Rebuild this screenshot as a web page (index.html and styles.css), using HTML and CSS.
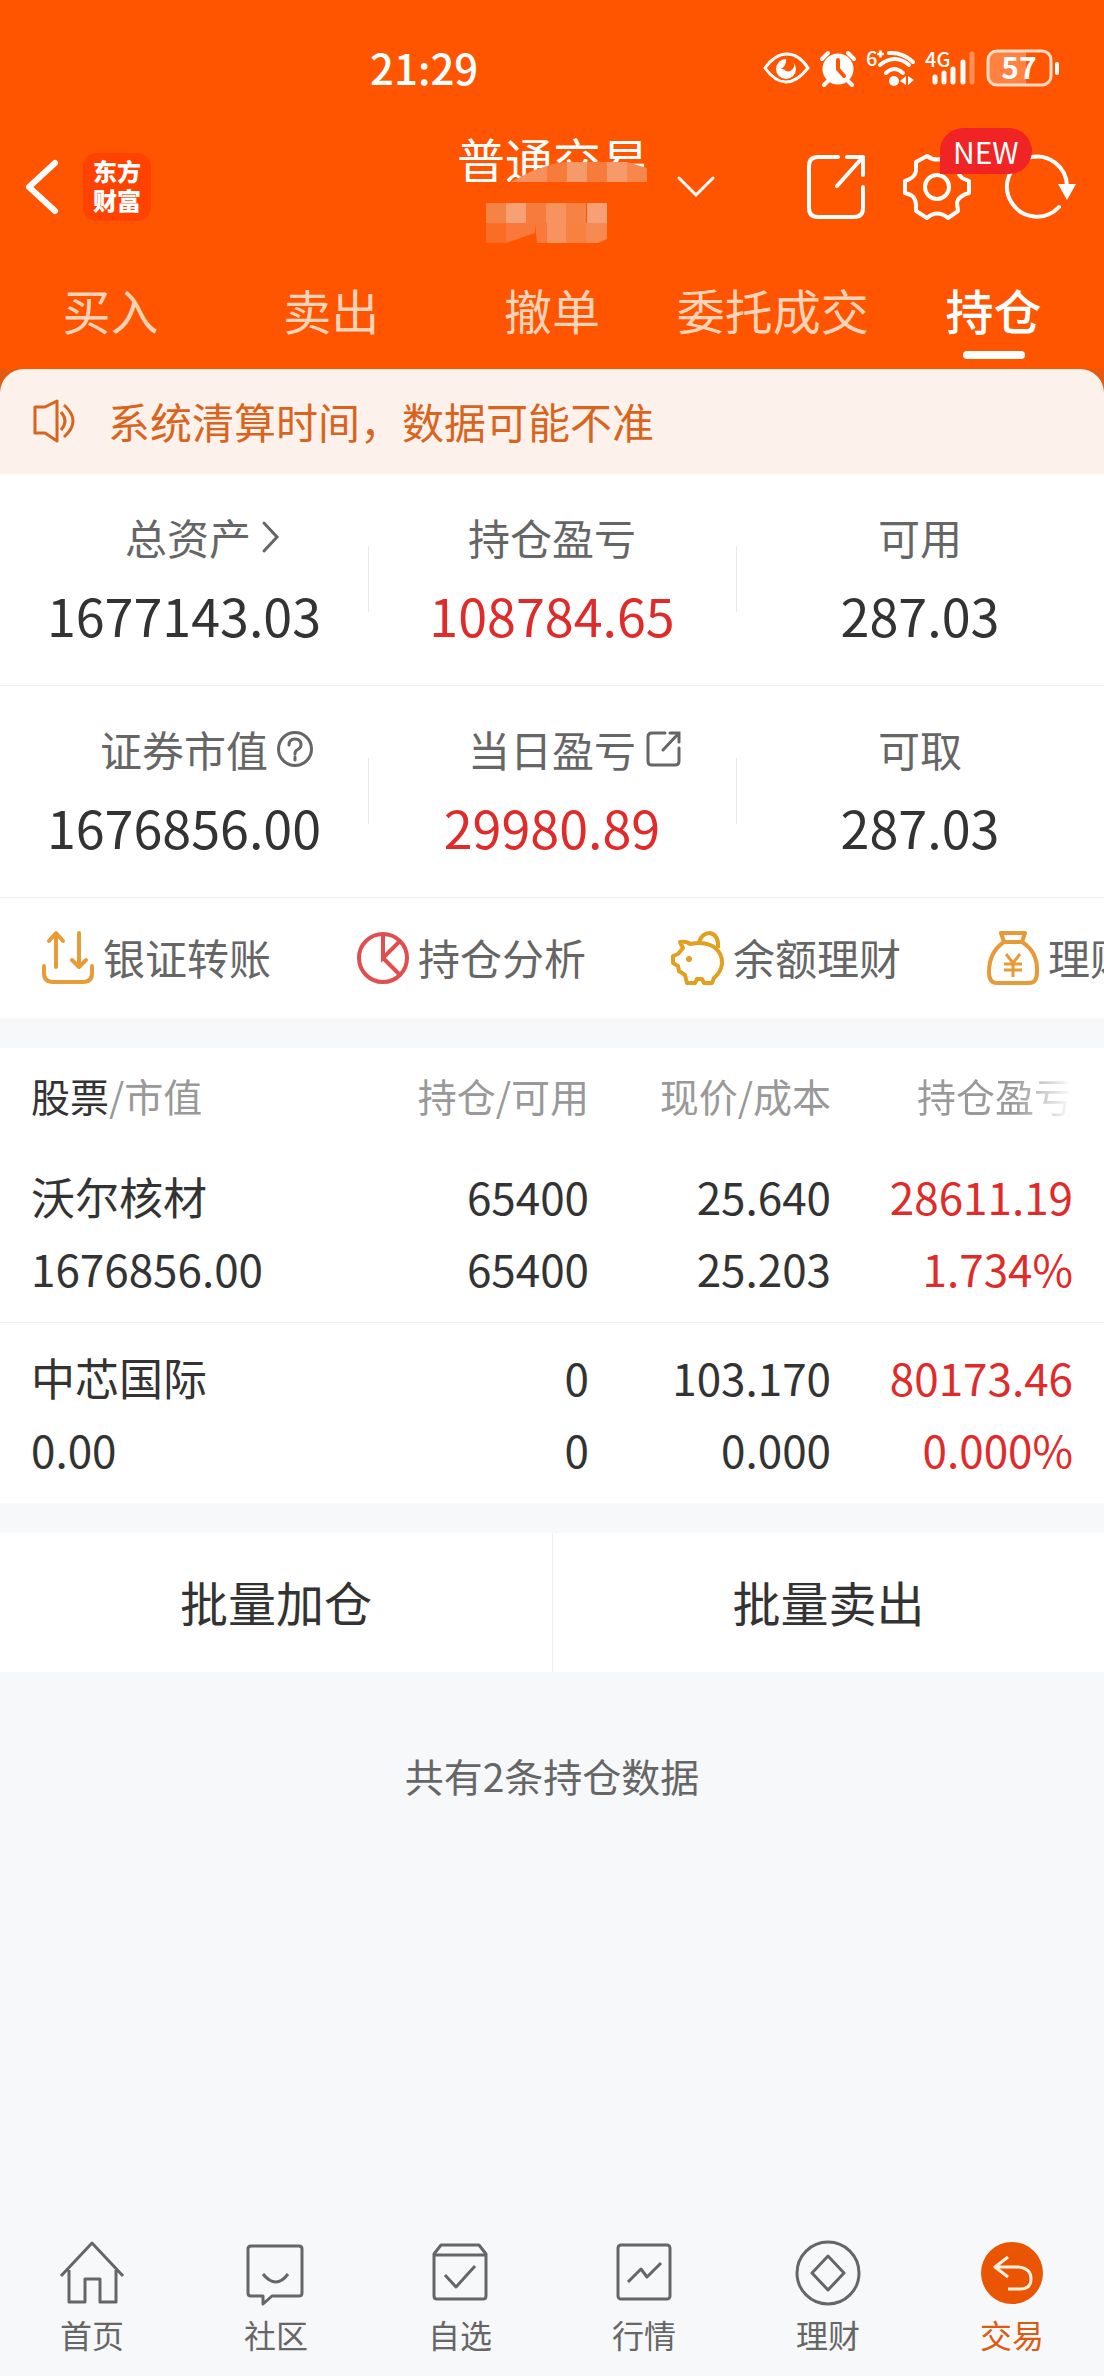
FILE: index.html
```html
<!DOCTYPE html>
<html lang="zh-CN">
<head>
<meta charset="utf-8">
<meta name="viewport" content="width=device-width, initial-scale=1">
<title>普通交易 - 持仓</title>
<link rel="stylesheet" href="styles.css">
</head>
<body>
<div class="app">
  <header class="header">
    <div class="status">
      <time class="clock">21:29</time>
      <div class="status-icons">
        <svg width="48" height="36" viewBox="0 0 48 36" fill="none" stroke="#fff" stroke-width="3"><path d="M3 18Q13 4 25 4T46 18Q35 32 24 32T3 18Z"/><path d="M24 9a10 10 0 1 0 10 10a10 10 0 0 0-3-7a6 6 0 0 1-7 9a5 5 0 0 0-5-2q6-4 5-10Z" fill="#fff" stroke="none"/></svg>
        <svg width="38" height="36" viewBox="0 0 38 36"><circle cx="19" cy="19" r="15.500" fill="#fff"/><path d="M3 9l6-6M35 9l-6-6M9 31l-4 4M29 31l4 4" stroke="#fff" stroke-width="4" stroke-linecap="round"/><path d="M19 10v9l6 7" fill="none" stroke="#f50" stroke-width="4" stroke-linecap="round"/></svg>
        <svg width="50" height="38" viewBox="0 0 50 38"><text x="0" y="17" class="mini">6</text><path d="M11 5h7M14.500 1.500v7" stroke="#fff" stroke-width="2.500"/><g fill="none" stroke="#fff" stroke-width="4" stroke-linecap="round"><path d="M23 4q14-1 24 9M14 16q15-12 29 0M20 24q8-8 17 0"/></g><circle cx="28" cy="32" r="5" fill="#fff"/><path d="M40 27v9l-6-4zM42 27v9l6-5z" fill="#fff"/></svg>
        <svg width="52" height="38" viewBox="0 0 52 38"><text x="0" y="18" class="mini">4G</text><g stroke="#fff" stroke-width="5" stroke-linecap="round"><path d="M10 28v5M19 24v9M28 20v13M38 13v20"/><path d="M47 5v28" opacity=".35"/></g></svg>
        <svg width="74" height="40" viewBox="0 0 74 40"><path d="M3 12a10 10 0 0 1 10-10h27v36H13a10 10 0 0 1-10-10z" fill="#ff8240"/><rect x="2" y="3" width="63" height="34" rx="9" fill="none" stroke="#ffdcc8" stroke-width="3"/><path d="M71 16v9" stroke="#fff" stroke-width="4" stroke-linecap="round"/><text x="33" y="31" class="battery" text-anchor="middle">57</text></svg>
      </div>
    </div>
    <div class="titlebar">
      <div class="left">
        <button class="icon-btn" aria-label="返回"><svg width="36" height="56" viewBox="0 0 36 56" fill="none" stroke="#fff" stroke-width="6" stroke-linecap="round" stroke-linejoin="round"><path d="M30 4L4 28L30 52"/></svg></button>
        <a class="brand" href="#">东方<br>财富</a>
      </div>
      <div class="account">
        <h1>普通交易</h1>
        <svg class="mosaic" width="230" height="84" viewBox="0 0 230 84" aria-hidden="true"><path d="M0 20h55L72 10Q110-2 145 2L190 10V22H225V42H180V72H10z" fill="#f50"/><path d="M52 20L75 8L88 4V20z" fill="#f8905c"/><path d="M88 4Q98 0 108 0V20H88zM128 0h20V20h-20z" fill="#f77c3c"/><path d="M108 0h20v20h-20z" fill="#f79a6b"/><path d="M148 0h20v20h-20z" fill="#f79a6b"/><path d="M168 0L188 6V20H168z" fill="#f8874d"/><path d="M27 41h20v20H27zM107 41h20v20h-20z" fill="#f68346"/><path d="M47 41h20v20H47zM128 41h20v20h-20z" fill="#f5a075"/><path d="M67 41h20v20H67z" fill="#f67c3d"/><path d="M87 41h20v40H87z" fill="#f7935f"/><path d="M27 61h20v20H27z" fill="#fb6d27"/><path d="M47 61h29v10L47 81z" fill="#f9793a"/><path d="M76 61h12v20H78z" fill="#f9793a"/><path d="M107 61h20v20h-20z" fill="#f7813f"/><path d="M127 61h21v16l-9 4h-12z" fill="#f78a50"/></svg>
        <button class="icon-btn expand" aria-label="切换账户"><svg width="38" height="22" viewBox="0 0 38 22" fill="none" stroke="#fff" stroke-width="3" stroke-linecap="round"><path d="M2 2L19 19L36 2"/></svg></button>
      </div>
      <div class="actions">
        <button class="icon-btn" aria-label="分享"><svg width="64" height="68" viewBox="0 0 64 68" fill="none" stroke="#fff" stroke-width="4" stroke-linecap="round" stroke-linejoin="round"><path d="M33 4H13Q4 4 4 13V55Q4 64 13 64H49Q58 64 58 55V34M42 4H58V22M58 4L32 33"/></svg></button>
        <button class="icon-btn gear" aria-label="设置"><svg width="70" height="68" viewBox="0 0 70 68" fill="none" stroke="#fff" stroke-width="4" stroke-linejoin="round"><circle cx="35" cy="34" r="12"/><path d="M25 3Q35 10 45 3L56 9Q54 20 60 25L67 28V40Q56 43 55 50L56 58L46 65Q35 56 25 65L14 58Q15 45 9 42L3 40V28Q13 25 14 18L14 9Z"/></svg><span class="badge">NEW</span></button>
        <button class="icon-btn" aria-label="刷新"><svg width="74" height="68" viewBox="0 0 74 68" fill="none" stroke="#fff" stroke-width="4" stroke-linecap="round"><path d="M62 34A30 30 0 1 0 54 54"/><path d="M53 31h18l-9 16z" fill="#fff" stroke="none"/></svg></button>
      </div>
    </div>
    <nav class="tabs">
      <a href="#">买入</a><a href="#">卖出</a><a href="#">撤单</a><a href="#">委托成交</a><a href="#" class="current">持仓</a>
    </nav>
  </header>

  <main>
    <div class="notice-wrap"><div class="notice">
      <svg width="44" height="44" viewBox="0 0 44 44" fill="none" stroke="#d9641e" stroke-width="3" stroke-linejoin="round"><path d="M3 8H13L25 2V42L13 34H3ZM29 13Q37 22 29 31M32 6Q50 22 32 38"/></svg>
      <span>系统清算时间，数据可能不准</span>
    </div></div>

    <dl class="stats">
      <div><dt>总资产<svg class="arrow" width="18" height="34" viewBox="0 0 18 34"><path d="M3 3L16 17L3 31"/></svg></dt><dd>1677143.03</dd></div>
      <div><dt>持仓盈亏</dt><dd class="up">108784.65</dd></div>
      <div><dt>可用</dt><dd>287.03</dd></div>
    </dl>
    <dl class="stats">
      <div><dt>证券市值<svg class="mark" width="38" height="38" viewBox="0 0 38 38"><circle cx="19" cy="19" r="16.500"/><path d="M13 15Q13 9 19 9T25 15Q25 18 21 20Q19 21 19 24M19 27v3"/></svg></dt><dd>1676856.00</dd></div>
      <div><dt>当日盈亏<svg class="mark" width="38" height="38" viewBox="0 0 38 38"><path d="M21 3H8Q4 3 4 7V31Q4 35 8 35H31Q35 35 35 31V18M26 3H35V12M35 3L19 20"/></svg></dt><dd class="up">29980.89</dd></div>
      <div><dt>可取</dt><dd>287.03</dd></div>
    </dl>

    <nav class="shortcuts">
      <a href="#"><svg width="54" height="56" viewBox="0 0 54 56" fill="none" stroke="#e69c37" stroke-width="4" stroke-linecap="round" stroke-linejoin="round"><path d="M15 37V4M8 11L15 3L22 11M38 3V37M31 30L38 37L45 30M3 36V43Q3 52 12 52H42Q51 52 51 43V36"/></svg><span>银证转账</span></a>
      <a href="#"><svg width="54" height="56" viewBox="0 0 54 56" fill="none" stroke="#e04e50" stroke-width="4"><circle cx="27" cy="28" r="24"/><path d="M27 4V28L44 11M27 28L44 45"/></svg><span>持仓分析</span></a>
      <a href="#"><svg width="54" height="56" viewBox="0 0 54 56" fill="none" stroke="#e3a020" stroke-width="4" stroke-linejoin="round"><path d="M9 12Q16 11 19 14Q33 11 43 17Q52 24 51 34Q50 42 43 48L41 53H33L31 49H26L24 53H16L14 45L8 41L7 36L2 33V26L7 24L12 18ZM28 12Q31 3 39 3Q48 5 47 18"/><circle cx="18" cy="29" r="3" fill="#e3a020" stroke="none"/></svg><span>余额理财</span></a>
      <a href="#"><svg width="54" height="56" viewBox="0 0 54 56" fill="none" stroke="#e69a38" stroke-width="4" stroke-linejoin="round"><path d="M15 3H39L36 12Q52 22 51 42Q51 53 43 53H11Q3 53 3 42Q3 22 18 12ZM18 12H36"/><path d="M20 24L27 33L34 24M27 33V47M18 34H36M18 40H36" stroke-width="3"/></svg><span>理财</span></a>
    </nav>

    <section class="panel">
      <table class="holdings">
        <colgroup><col><col class="qty"><col class="price"><col class="profit"></colgroup>
        <thead><tr><th><b>股票</b>/市值</th><th>持仓/可用</th><th>现价/成本</th><th><span class="fade">持仓盈亏</span></th></tr></thead>
        <tbody>
          <tr><td>沃尔核材<br>1676856.00</td><td>65400<br>65400</td><td>25.640<br>25.203</td><td class="up">28611.19<br>1.734%</td></tr>
          <tr><td>中芯国际<br>0.00</td><td>0<br>0</td><td>103.170<br>0.000</td><td class="up">80173.46<br>0.000%</td></tr>
        </tbody>
      </table>
    </section>

    <div class="batch"><button>批量加仓</button><button>批量卖出</button></div>
    <p class="summary">共有2条持仓数据</p>
  </main>

  <nav class="bottom">
    <a href="#"><svg viewBox="0 0 68 68"><path d="M3 37L34 4L65 37M11 31V63H27V40H42V63H58V31"/></svg>首页</a>
    <a href="#"><svg viewBox="0 0 68 68"><path d="M9 7H57Q60 7 60 10V54Q60 57 57 57H30L21 65V57H9Q6 57 6 54V10Q6 7 9 7ZM21 35Q34 51 46 35"/></svg>社区</a>
    <a href="#"><svg viewBox="0 0 68 68"><path d="M8 15L15 6H53L60 15V57Q60 60 57 60H11Q8 60 8 57ZM8 16H60M19 36L30 48L49 27"/></svg>自选</a>
    <a href="#"><svg viewBox="0 0 68 68"><rect x="8" y="6" width="52" height="54" rx="3"/><path d="M18 43L31 30L37 38L51 24"/></svg>行情</a>
    <a href="#"><svg viewBox="0 0 68 68"><circle cx="34" cy="34" r="31"/><path d="M34 17L50 34L34 51L18 34Z"/></svg>理财</a>
    <a href="#" class="current"><svg viewBox="0 0 68 68"><circle cx="34" cy="34" r="31" fill="#ea5504" stroke="none"/><path d="M30 18L17 28L30 38M17 28H40Q53 29 53 40T40 50H30" stroke="#fff0e0"/></svg>交易</a>
  </nav>
</div>
</body>
</html>
```
FILE: styles.css
```css
* { box-sizing: border-box; }
body { margin: 0; background: #f7f8fa; color: #333; font-family: "Noto Sans CJK SC", sans-serif; }
a { color: inherit; text-decoration: none; }
button { font: inherit; color: inherit; border: 0; padding: 0; background: none; }
svg { display: block; flex: none; overflow: visible; }
.app { display: flex; flex-direction: column; min-height: 100vh; }
main { flex: 1; }
.up { color: #e02b2b; }

.header { background: #f50; color: #fff; }
.status { display: flex; align-items: center; justify-content: space-between; height: 124px; padding: 8px 44px 0 370px; }
.clock { font-size: 42px; font-weight: 500; }
.status-icons { display: flex; align-items: center; gap: 9px; padding-top: 3px; }
.mini { font-size: 20px; font-weight: 500; fill: #fff; }
.battery { font-size: 30px; font-weight: 700; fill: #fff; }

.titlebar { display: grid; grid-template-columns: 1fr auto 1fr; height: 126px; padding: 0 25px; }
.left { display: flex; align-items: center; gap: 22px; }
.brand { width: 68px; height: 68px; padding-top: 3px; border-radius: 14px; background: #ff4200; font-size: 24px; line-height: 29px; font-weight: 900; text-align: center; }
.account { position: relative; width: 190px; padding-top: 4px; }
.account h1 { margin: 0; font-size: 48px; line-height: 60px; font-weight: 400; white-space: nowrap; }
.mosaic { position: absolute; left: 2px; top: 38px; }
.expand { position: absolute; left: 220px; top: 52px; }
.actions { display: flex; align-items: center; justify-content: flex-end; gap: 33px; }
.gear { position: relative; }
.badge { position: absolute; left: 38px; top: -25px; padding: 0 13px; border-radius: 24px 24px 24px 0; background: #f02424; font-size: 30px; line-height: 46px; z-index: 1; }

.tabs { display: grid; grid-template-columns: repeat(5, 1fr); height: 119px; color: #ffd3b8; font-size: 48px; line-height: 70px; text-align: center; }
.tabs a { position: relative; padding-top: 24px; }
.tabs .current { color: #fff; font-weight: 500; }
.tabs .current::after { content: ""; position: absolute; left: 50%; bottom: 10px; width: 62px; height: 8px; margin-left: -31px; border-radius: 4px; background: #fff; }

.notice-wrap { background: #e35a10; }
.notice { display: flex; align-items: center; gap: 32px; height: 105px; padding: 0 32px 2px; border-radius: 24px 24px 0 0; background: #fdf1eb; color: #d9641e; font-size: 42px; }

.stats { display: grid; grid-template-columns: repeat(3, 1fr); margin: 0; background: #fff; border-bottom: 1px solid #eee; text-align: center; }
.stats div { position: relative; padding: 31px 0 30px; }
.stats div + div::before { content: ""; position: absolute; left: 0; top: 72px; width: 1px; height: 66px; background: #e8e8e8; }
.stats dt { display: flex; align-items: center; justify-content: center; color: #666; font-size: 42px; line-height: 64px; }
.stats dd { margin: 6px 0 0; font-size: 52px; line-height: 80px; }
.stats svg { fill: none; stroke: #666; stroke-width: 3; stroke-linecap: round; }
.arrow { margin: 0 -36px 0 10px; }
.mark { margin: 0 -46px 0 8px; }

.shortcuts { display: flex; height: 120px; padding-left: 41px; overflow: hidden; background: #fff; color: #666; font-size: 42px; }
.shortcuts a { display: flex; flex: none; align-items: center; gap: 8px; width: 315px; }
.shortcuts span { padding-bottom: 4px; }

.panel { margin: 30px 0; background: #fff; }
.holdings { width: 100%; border-collapse: collapse; table-layout: fixed; text-align: right; font-size: 44px; line-height: 72px; }
.qty { width: 242px; }
.price { width: 242px; }
.profit { width: 273px; }
.holdings th { height: 94px; padding: 0; color: #999; font-size: 39px; font-weight: 400; }
.holdings b { color: #333; font-weight: 400; }
.holdings td { padding: 18px 0; }
.holdings tr > :first-child { padding-left: 31px; text-align: left; }
.holdings tr > :last-child { padding-right: 31px; }
.holdings tbody tr + tr { border-top: 1px solid #eee; }
.fade { color: transparent; background: linear-gradient(90deg, #999 62%, #fff) text; }

.batch { display: grid; grid-template-columns: 1fr 1fr; background: #fff; font-size: 48px; }
.batch button { height: 139px; padding-bottom: 3px; }
.batch button + button { border-left: 1px solid #eee; }
.summary { margin: 0; padding-top: 74px; color: #666; font-size: 39px; line-height: 58px; text-align: center; }

.bottom { display: grid; grid-template-columns: repeat(6, 1fr); padding-bottom: 17px; color: #666; font-size: 32px; line-height: 50px; }
.bottom a { display: flex; flex-direction: column; align-items: center; gap: 2px; }
.bottom svg { width: 68px; height: 68px; fill: none; stroke: #666; stroke-width: 3; stroke-linejoin: round; }
.bottom .current { color: #dc5a14; }
```
